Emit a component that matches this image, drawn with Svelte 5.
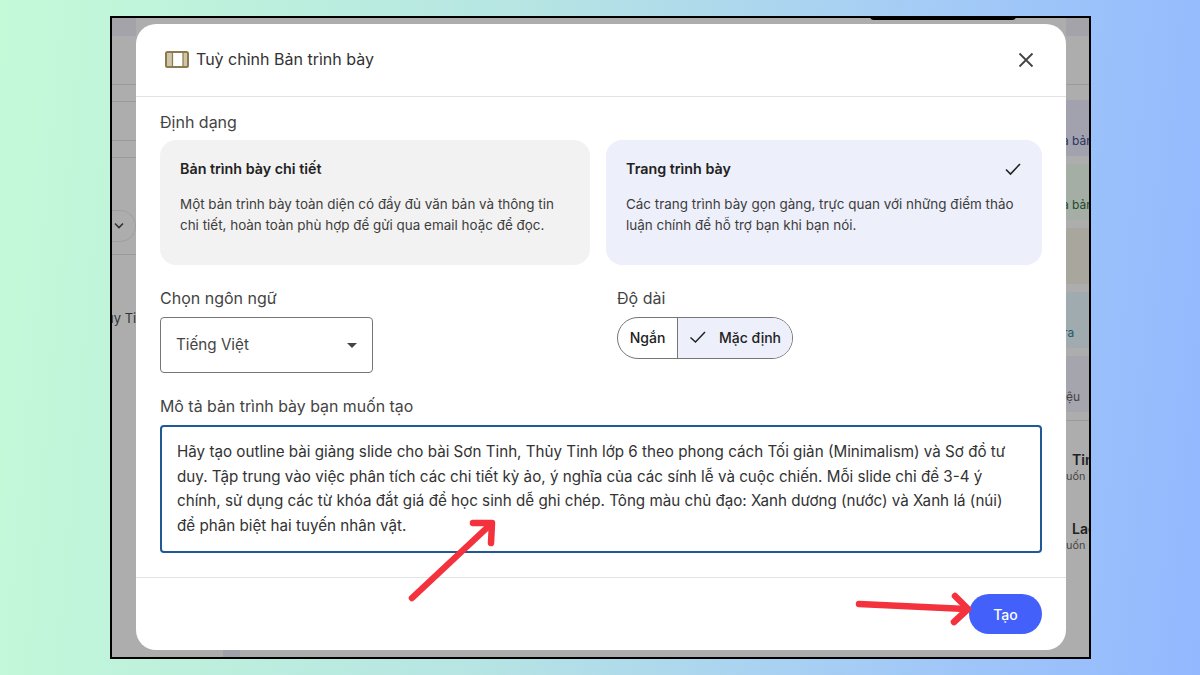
<script>
  const description =
    "Hãy tạo outline bài giảng slide cho bài Sơn Tinh, Thủy Tinh lớp 6 theo phong cách Tối giản (Minimalism) và Sơ đồ tư duy. Tập trung vào việc phân tích các chi tiết kỳ ảo, ý nghĩa của các sính lễ và cuộc chiến. Mỗi slide chỉ để 3-4 ý chính, sử dụng các từ khóa đắt giá để học sinh dễ ghi chép. Tông màu chủ đạo: Xanh dương (nước) và Xanh lá (núi) để phân biệt hai tuyến nhân vật.";
</script>

<div class="page">
  <div class="frame">
    <div class="top-pill"></div>
    <div class="under-block"></div>

    <div class="strip left">
      <div class="band-top"></div>
      <div class="rule r1"></div>
      <div class="rule r2"></div>
      <div class="rule r3"></div>
      <div class="rule r4"></div>
      <div class="chev-row">
        <svg width="12" height="8" viewBox="0 0 12 8"><path d="M2 1.500 L6 5.500 L10 1.500" fill="none" stroke="#333" stroke-width="1.600" /></svg>
      </div>
      <div class="rule r5"></div>
      <div class="clip-text">ủy Ti</div>
    </div>

    <div class="modal">
      <header>
        <svg class="film" width="24" height="17" viewBox="0 0 24 17">
          <rect x="1" y="1" width="22" height="15" rx="1.500" fill="#fff" stroke="#8b7a4e" stroke-width="2" />
          <rect x="2" y="2" width="6" height="13" fill="#cfc6a8" />
          <rect x="18" y="2" width="4" height="13" fill="#cfc6a8" />
          <path d="M7.500 1 V16 M18 1 V16" stroke="#8b7a4e" stroke-width="1.200" />
        </svg>
        <h1>Tuỳ chỉnh Bản trình bày</h1>
        <svg class="close" width="16" height="16" viewBox="0 0 16 16">
          <path d="M1.500 1.500 L14.500 14.500 M14.500 1.500 L1.500 14.500" stroke="#444" stroke-width="1.800" />
        </svg>
      </header>

      <main>
        <div class="label">Định dạng</div>
        <div class="cards">
          <div class="card">
            <div class="card-title">Bản trình bày chi tiết</div>
            <p>Một bản trình bày toàn diện có đầy đủ văn bản và thông tin chi tiết, hoàn toàn phù hợp để gửi qua email hoặc để đọc.</p>
          </div>
          <div class="card selected">
            <div class="card-title">
              Trang trình bày
              <svg width="18" height="14" viewBox="0 0 18 14"><path d="M2 7.500 L6.500 12 L16 2" fill="none" stroke="#222" stroke-width="1.600" /></svg>
            </div>
            <p>Các trang trình bày gọn gàng, trực quan với những điểm thảo luận chính để hỗ trợ bạn khi bạn nói.</p>
          </div>
        </div>

        <div class="options">
          <div class="lang">
            <div class="label">Chọn ngôn ngữ</div>
            <div class="select">
              <span>Tiếng Việt</span>
              <i class="caret"></i>
            </div>
          </div>
          <div class="length">
            <div class="label">Độ dài</div>
            <div class="segments">
              <div class="seg short">Ngắn</div>
              <div class="seg active">
                <svg width="18" height="14" viewBox="0 0 18 14"><path d="M1.500 7.500 L6.500 12 L16 2" fill="none" stroke="#222" stroke-width="1.500" /></svg>
                Mặc định
              </div>
            </div>
          </div>
        </div>

        <div class="label desc-label">Mô tả bản trình bày bạn muốn tạo</div>
        <textarea readonly value={description}></textarea>
      </main>

      <footer>
        <button>Tạo</button>
      </footer>
    </div>

    <div class="strip right">
      <div class="band-top"></div>
      <div class="rule r6"></div>
      <div class="tile blue"><span>a bản</span></div>
      <div class="tile green"><span>a bản</span></div>
      <div class="tile sand"></div>
      <div class="tile teal"><span>ra</span></div>
      <div class="tile grey"><span>ệu</span></div>
      <div class="rule r7"></div>
      <div class="source first"><b>Tin</b><small>uốn</small></div>
      <div class="source"><b>Lac</b><small>uốn</small></div>
    </div>

    <svg class="arrows" width="1200" height="675" viewBox="0 0 1200 675">
      <g fill="none" stroke="#f4323e" stroke-width="6.500" stroke-linecap="round" stroke-linejoin="round">
        <path d="M412 598 L491 524" />
        <path d="M473 523 L492 523 L491 543" />
        <path d="M859 604 L966 609" />
        <path d="M955 596 L968 609 L954 622" />
      </g>
    </svg>
  </div>
</div>

<style>
  :global(body) {
    margin: 0;
  }

  .page {
    width: 1200px;
    height: 675px;
    padding: 16px 0 0 110px;
    box-sizing: border-box;
    background: linear-gradient(95deg, #c4fad8 0%, #b6e5e3 42%, #a5cdf5 72%, #93b8ff 100%);
    font-family: "Inter", "Liberation Sans", sans-serif;
    overflow: hidden;
  }

  .frame {
    width: 981px;
    height: 643px;
    box-sizing: border-box;
    border: 2px solid #000;
    background: #adadad;
    display: flex;
    align-items: flex-start;
    position: relative;
  }

  .top-pill {
    position: absolute;
    top: -2px;
    left: 758px;
    width: 146px;
    height: 4px;
    background: #000;
    border-radius: 0 0 6px 6px;
  }

  .under-block {
    position: absolute;
    left: 111px;
    bottom: 0;
    width: 17px;
    height: 7px;
    background: #a0a0a8;
  }

  .strip {
    height: 100%;
    overflow: hidden;
    color: #333;
    font-size: 12px;
  }

  .strip.left {
    width: 24px;
    flex: none;
  }

  .strip.right {
    flex: 1;
  }

  .band-top {
    height: 18px;
    background: #a3a3a9;
  }

  .rule {
    height: 1px;
    background: #9b9b9b;
  }

  .r1 { margin-top: 48px; }
  .r2 { margin-top: 16px; }
  .r3 { margin-top: 38px; }
  .r4 { margin-top: 16px; }

  .chev-row {
    margin-top: 52px;
    height: 32px;
    width: 24px;
    box-sizing: border-box;
    border: 1px solid #a0a0a0;
    border-left: 0;
    border-radius: 0 16px 16px 0;
    display: flex;
    align-items: center;
    padding-left: 1px;
  }

  .r5 { margin-top: 12px; }

  .clip-text {
    margin-top: 55px;
    margin-left: -6px;
    white-space: nowrap;
    font-size: 13px;
    line-height: 16px;
  }

  .modal {
    width: 930px;
    height: 626px;
    flex: none;
    margin-top: 6px;
    background: #fff;
    border-radius: 20px;
    overflow: hidden;
    display: flex;
    flex-direction: column;
    color: #1f1f1f;
  }

  header {
    height: 73px;
    flex: none;
    box-sizing: border-box;
    border-bottom: 1px solid #e3e3e3;
    display: flex;
    align-items: center;
    padding: 0 32px 2px 29px;
    gap: 7px;
  }

  h1 {
    margin: 0;
    flex: 1;
    font-size: 16px;
    font-weight: 400;
    color: #333;
  }

  .close {
    margin-top: 2px;
  }

  main {
    flex: 1;
    padding: 15px 24px 0;
  }

  .label {
    font-size: 16px;
    line-height: 20px;
    color: #444;
  }

  .cards {
    display: flex;
    gap: 16px;
    margin-top: 8px;
  }

  .card {
    flex: 1;
    height: 125px;
    box-sizing: border-box;
    padding: 20px 14px 20px 20px;
    background: #f2f2f2;
    border-radius: 16px;
  }

  .card.selected {
    background: #edeffa;
    padding-right: 20px;
  }

  .card-title {
    font-size: 14.300px;
    font-weight: 600;
    line-height: 17px;
    color: #222;
    display: flex;
    justify-content: space-between;
    align-items: center;
  }

  .card p {
    margin: 17px 0 0;
    font-size: 13.450px;
    line-height: 21px;
    color: #3c3c3c;
  }

  .options {
    display: flex;
    margin-top: 23px;
  }

  .lang {
    width: 457px;
  }

  .select {
    width: 213px;
    height: 56px;
    margin-top: 9px;
    box-sizing: border-box;
    border: 1px solid #747775;
    border-radius: 4px;
    display: flex;
    align-items: center;
    justify-content: space-between;
    padding: 0 15px 2px;
    font-size: 15.200px;
    color: #444;
  }

  .caret {
    width: 0;
    height: 0;
    border-left: 5px solid transparent;
    border-right: 5px solid transparent;
    border-top: 5px solid #444;
    margin-top: 2px;
  }

  .segments {
    display: flex;
    height: 42px;
    width: 176px;
    margin-top: 9px;
    box-sizing: border-box;
    border: 1px solid #747775;
    border-radius: 21px;
    overflow: hidden;
    font-size: 14px;
    font-weight: 500;
    color: #222;
  }

  .seg {
    display: flex;
    align-items: center;
    justify-content: center;
    padding-bottom: 2px;
    box-sizing: border-box;
  }

  .seg.short {
    width: 60px;
    border-right: 1px solid #747775;
  }

  .seg.active {
    flex: 1;
    gap: 12px;
    background: #edeffa;
  }

  .desc-label {
    margin-top: 24px;
    font-size: 15.900px;
  }

  textarea {
    display: block;
    width: 100%;
    height: 128px;
    margin-top: 8px;
    box-sizing: border-box;
    border: 2px solid #1f5a96;
    border-radius: 4px;
    padding: 13px 25px 13px 15px;
    outline: none;
    resize: none;
    overflow: hidden;
    font-family: inherit;
    font-size: 15.200px;
    line-height: 24.600px;
    color: #333;
  }

  footer {
    height: 73px;
    flex: none;
    box-sizing: border-box;
    border-top: 1px solid #e3e3e3;
    display: flex;
    justify-content: flex-end;
    padding: 16px 24px 0;
  }

  button {
    width: 73px;
    height: 40px;
    border: 0;
    border-radius: 20px;
    background: #4361fa;
    color: #fff;
    font-family: inherit;
    font-size: 14px;
    font-weight: 500;
  }

  .r6 { margin-top: 48px; }

  .tile {
    height: 56px;
    margin-bottom: 8px;
    position: relative;
    font-size: 12px;
    line-height: 15px;
    white-space: nowrap;
  }

  .tile span {
    position: absolute;
    left: -4px;
    bottom: 8px;
  }

  .blue { background: #a2a2ae; margin-top: 15px; color: #2a3560; }
  .green { background: #a4aea4; color: #1f4a2a; }
  .sand { background: #a9a79d; }
  .teal { background: #9fabaf; color: #1f5a6a; }
  .teal span { left: -3px; }
  .grey { background: #a5a5ad; color: #444; }
  .grey span { left: 0; }

  .r7 { margin-top: 8px; }

  .source {
    margin-top: 37px;
    white-space: nowrap;
    display: flex;
    flex-direction: column;
    gap: 2px;
    font-size: 13px;
    color: #444;
  }

  .source.first { margin-top: 30px; }

  .source b {
    margin-left: 6px;
    font-size: 14px;
    font-weight: 600;
    color: #222;
  }

  .arrows {
    position: absolute;
    left: -112px;
    top: -18px;
    pointer-events: none;
  }
</style>
